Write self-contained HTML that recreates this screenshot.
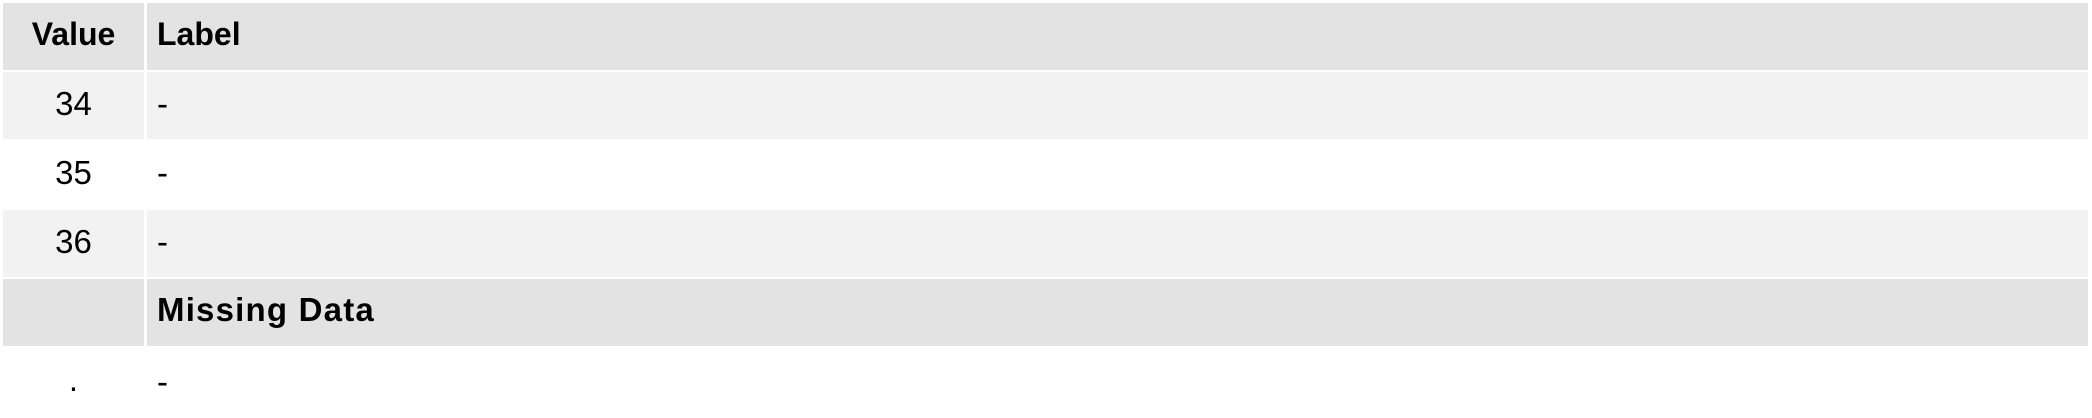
<!DOCTYPE html>
<html><head><style>
body{margin:0;width:2092px;height:418px;background:#fff;position:relative;font-family:"Liberation Sans",Arial,sans-serif;color:#000;overflow:hidden}
.c{position:absolute;box-sizing:border-box}
.h{background:#e3e3e3}
.s{background:#f2f2f2}
.t{position:absolute;white-space:nowrap;line-height:1}
.b{font-size:32px;font-weight:bold}
</style></head><body>
<div class="c h" style="left:3px;top:3px;width:141px;height:67px"></div>
<div class="c h" style="left:147px;top:3px;width:1941px;height:67px"></div>
<div class="c s" style="left:3px;top:72px;width:141px;height:67px"></div>
<div class="c s" style="left:147px;top:72px;width:1941px;height:67px"></div>
<div class="c s" style="left:3px;top:210px;width:141px;height:67px"></div>
<div class="c s" style="left:147px;top:210px;width:1941px;height:67px"></div>
<div class="c h" style="left:3px;top:279px;width:141px;height:67px"></div>
<div class="c h" style="left:147px;top:279px;width:1941px;height:67px"></div>

<div class="t b" style="left:0;width:147px;text-align:center;top:18px">Value</div>
<div class="t b" style="left:157px;top:18px">Label</div>

<div class="t" style="left:0;width:147px;text-align:center;top:87px;font-size:33px">34</div>
<div class="t" style="left:157px;top:87px;font-size:33px">-</div>
<div class="t" style="left:0;width:147px;text-align:center;top:156px;font-size:33px">35</div>
<div class="t" style="left:157px;top:156px;font-size:33px">-</div>
<div class="t" style="left:0;width:147px;text-align:center;top:225px;font-size:33px">36</div>
<div class="t" style="left:157px;top:225px;font-size:33px">-</div>
<div class="t b" style="left:157px;top:293px;font-size:33px;letter-spacing:1.2px">Missing Data</div>
<div class="t" style="left:0;width:147px;text-align:center;top:363px;font-size:33px">.</div>
<div class="t" style="left:157px;top:365px;font-size:33px">-</div>
</body></html>
